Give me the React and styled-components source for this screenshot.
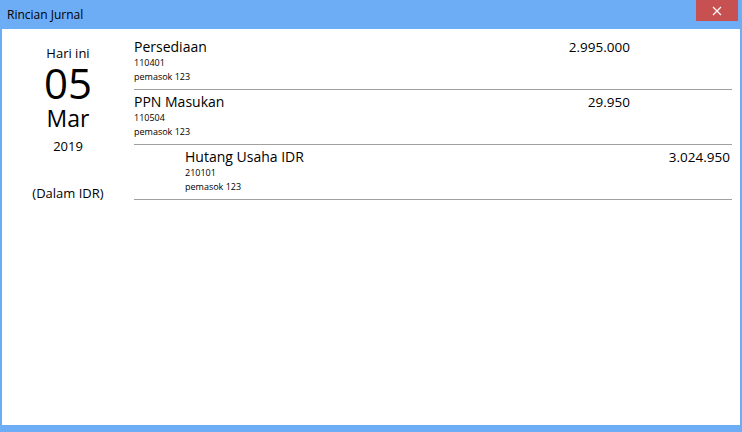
import React from 'react';
import styled, { createGlobalStyle } from 'styled-components';

const GlobalStyle = createGlobalStyle`
  html, body {
    margin: 0;
    padding: 0;
    background: #6cadf5;
  }
  body {
    font-family: "Open Sans", "Noto Sans", sans-serif;
    color: #000;
  }
`;

const entries = [
  { name: 'Persediaan', code: '110401', memo: 'pemasok 123', debit: '2.995.000' },
  { name: 'PPN Masukan', code: '110504', memo: 'pemasok 123', debit: '29.950' },
  { name: 'Hutang Usaha IDR', code: '210101', memo: 'pemasok 123', credit: '3.024.950' },
];

const App = () => (
  <Window>
    <GlobalStyle />
    <TitleBar>
      <Title>Rincian Jurnal</Title>
      <CloseButton>
        <svg width="10" height="10" viewBox="0 0 10 10">
          <path d="M1 1 L9 9 M9 1 L1 9" stroke="#fff" strokeWidth="1.2" />
        </svg>
      </CloseButton>
    </TitleBar>
    <Body>
      <DateColumn>
        <Today>Hari ini</Today>
        <Day>05</Day>
        <Month>Mar</Month>
        <Year>2019</Year>
        <Currency>(Dalam IDR)</Currency>
      </DateColumn>
      <EntryList>
        {entries.map((e) => (
          <Entry key={e.code}>
            <AccountInfo $indent={!!e.credit}>
              <AccountName>{e.name}</AccountName>
              <SmallText>{e.code}</SmallText>
              <SmallText>{e.memo}</SmallText>
            </AccountInfo>
            <Amount>{e.debit}</Amount>
            <Amount>{e.credit}</Amount>
          </Entry>
        ))}
      </EntryList>
    </Body>
  </Window>
);

export default App;

const Window = styled.div`
  width: 742px;
  height: 432px;
  display: flex;
  flex-direction: column;
  background: #6cadf5;
  box-sizing: border-box;
  padding: 0 2px 7px 2px;
`;

const TitleBar = styled.div`
  height: 29px;
  display: flex;
  justify-content: space-between;
  align-items: flex-start;
`;

const Title = styled.div`
  font-size: 12px;
  line-height: 16px;
  padding: 7px 0 0 5px;
`;

const CloseButton = styled.div`
  width: 42px;
  height: 21px;
  margin-right: 2px;
  background: #c75050;
  display: flex;
  align-items: center;
  justify-content: center;
`;

const Body = styled.div`
  flex: 1;
  background: #fff;
  display: flex;
`;

const DateColumn = styled.div`
  width: 132px;
  display: flex;
  flex-direction: column;
  align-items: center;
  padding-top: 16px;
`;

const Today = styled.div`
  font-size: 13px;
  line-height: 16px;
`;

const Day = styled.div`
  font-size: 42px;
  line-height: 44px;
`;

const Month = styled.div`
  font-size: 23px;
  line-height: 27px;
`;

const Year = styled.div`
  font-size: 13px;
  line-height: 16px;
  margin-top: 6px;
`;

const Currency = styled.div`
  font-size: 13px;
  line-height: 16px;
  margin-top: 31px;
`;

const EntryList = styled.div`
  width: 598px;
  padding-top: 6px;
`;

const Entry = styled.div`
  display: grid;
  grid-template-columns: 1fr 100px 100px;
  padding: 3px 2px 5px 0;
  border-bottom: 1px solid #a0a0a0;
`;

const AccountInfo = styled.div`
  padding-left: ${(p) => (p.$indent ? '51px' : '0')};
`;

const AccountName = styled.div`
  font-size: 14px;
  line-height: 18px;
`;

const SmallText = styled.div`
  font-size: 9px;
  line-height: 14px;
  &:first-of-type {
    margin-top: 1px;
  }
`;

const Amount = styled.div`
  font-size: 13.5px;
  line-height: 18px;
  text-align: right;
`;
